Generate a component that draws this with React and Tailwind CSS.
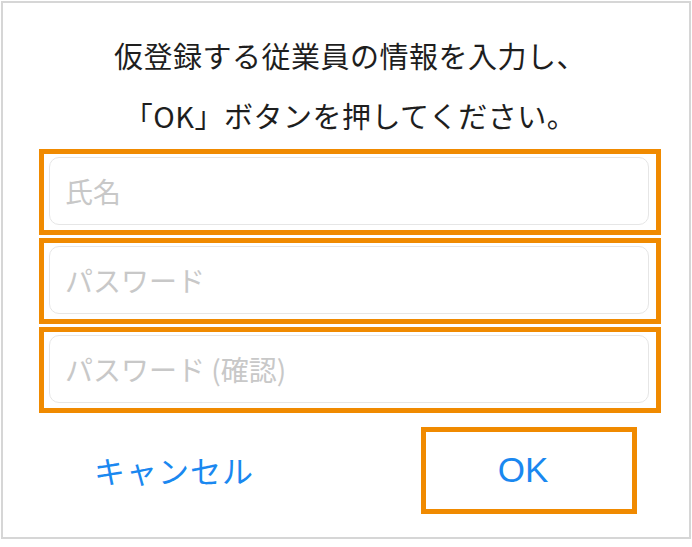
import React from "react";

const jp = { fontFamily: '"Noto Sans CJK JP", "Noto Sans", sans-serif' };

function Field({ placeholder }) {
  return (
    <div className="h-[86px] w-[622px] border-[5px] border-[#f08a00] pt-[3px] pb-[5px] pl-[5px] pr-[7px]">
      <div className="h-full w-full rounded-[10px] border border-[#e6e6e6] flex items-center pl-[15px] text-[28px] text-[#c8c8c8]">
        {placeholder}
      </div>
    </div>
  );
}

export default function App() {
  return (
    <div className="w-[692px] h-[547px] bg-white p-[1px]" style={jp}>
      <div className="w-[690px] h-[538px] border-2 border-[#d6d6d6] flex flex-col items-center">
        <div className="pt-[22px] pl-[8px] text-center text-[29px] leading-[60px] tracking-[0.5px] text-[#1e1e1e]">
          <div>仮登録する従業員の情報を入力し、</div>
          <div>「OK」ボタンを押してください。</div>
        </div>
        <div className="mt-[4px] self-start ml-[36px] flex flex-col gap-[3px]">
          <Field placeholder="氏名" />
          <Field placeholder="パスワード" />
          <Field placeholder="パスワード (確認)" />
        </div>
        <div className="mt-[14px] w-full flex items-center">
          <div className="ml-[91px] text-[31px] tracking-[1px] text-[#1a88f0]">キャンセル</div>
          <div className="ml-auto mr-[52px] w-[216px] h-[87px] border-[5px] border-[#f08a00] flex items-center justify-center pr-[12px]">
            <span
              className="text-[35px] text-[#1a88f0]"
              style={{ fontFamily: '"Liberation Sans", Arial, sans-serif' }}
            >
              OK
            </span>
          </div>
        </div>
      </div>
    </div>
  );
}
